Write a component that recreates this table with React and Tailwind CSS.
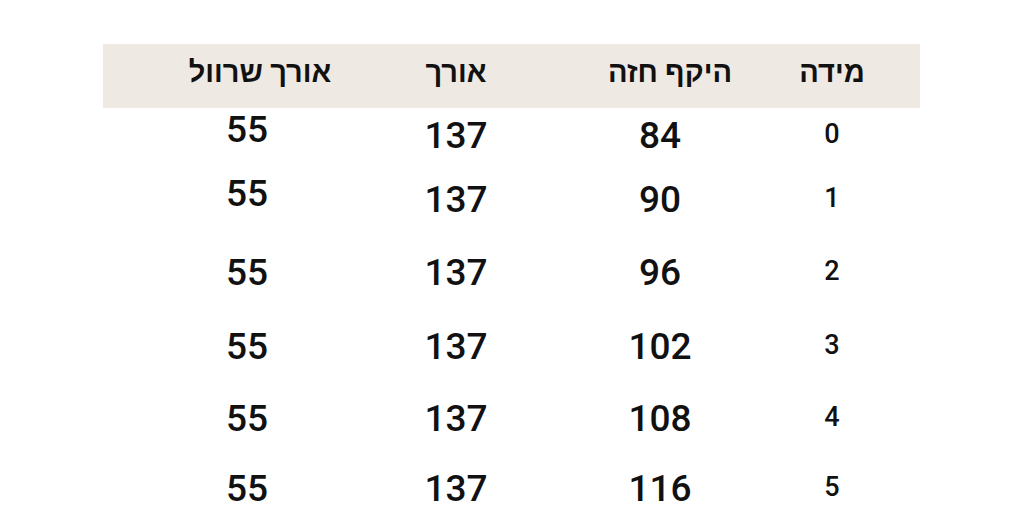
import React from "react";

const rows = [
  { size: "0", chest: "84", len: "137", sleeve: "55", h: "h-[54px]", up: true },
  { size: "1", chest: "90", len: "137", sleeve: "55", h: "h-[74px]", up: true },
  { size: "2", chest: "96", len: "137", sleeve: "55", h: "h-[73px]" },
  { size: "3", chest: "102", len: "137", sleeve: "55", h: "h-[74px]" },
  { size: "4", chest: "108", len: "137", sleeve: "55", h: "h-[71px]" },
  { size: "5", chest: "116", len: "137", sleeve: "55", h: "h-[68px]" },
];

const App = () => {
  return (
    <div className="w-[1024px] h-[511px] overflow-hidden bg-white font-['Roboto','Liberation_Sans',sans-serif] text-[#111]">
      <div dir="rtl" className="ml-[103px] mt-[44px] w-[817px]">
        <div className="grid grid-cols-[176px_168px_240px_233px] h-[64px] bg-[#eee9e3] items-center text-[29px] font-semibold leading-none">
          <div className="flex justify-center pb-[8px]">מידה</div>
          <div className="flex justify-center pl-[20px] pb-[8px]">היקף חזה</div>
          <div className="flex justify-center pb-[8px]">אורך</div>
          <div className="flex justify-center pl-[81px] pb-[8px]">אורך שרוול</div>
        </div>
        {rows.map((r) => (
          <div
            key={r.size}
            className={`grid grid-cols-[176px_168px_240px_233px] items-center font-medium leading-none ${r.h}`}
          >
            <div className="flex justify-center text-[27px] pb-[2px]">{r.size}</div>
            <div className="flex justify-center text-[37px]">{r.chest}</div>
            <div className="flex justify-center text-[37px]">{r.len}</div>
            <div
              className={`flex justify-center pl-[55px] text-[37px] ${r.up ? "pb-[12px]" : ""}`}
            >
              {r.sleeve}
            </div>
          </div>
        ))}
      </div>
    </div>
  );
};

export default App;
